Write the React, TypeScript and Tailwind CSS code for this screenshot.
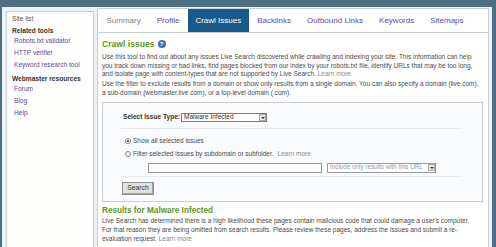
const tabs = ["Summary", "Profile", "Crawl Issues", "Backlinks", "Outbound Links", "Keywords", "Sitemaps"];

export default function App() {
  return (
    <div className="h-[247px] w-[496px] overflow-hidden bg-[#4d6e83] pl-[2px] pr-[4px] pt-[7px] font-['Liberation_Sans',Arial,sans-serif]">
      <div className="flex h-[260px] gap-[3px] bg-[#edf1f4] pl-[4px] pr-[3px] pt-[1px]">
        <Sidebar />
        <main className="min-w-0 flex-1 border border-[#c5ced6] bg-white">
          <nav className="flex h-[24px] items-stretch gap-[1px] border-b border-[#c5ced6] pl-[1px] text-[8px] whitespace-nowrap">
            {tabs.map((tab) => (
              <span
                key={tab}
                className={`flex items-center px-[7.5px] ${
                  tab === "Crawl Issues"
                    ? "bg-[#1a5a8a] text-white"
                    : tab === "Summary"
                      ? "text-[#808080]"
                      : "text-[#5b4ba6]"
                }`}
              >
                {tab}
              </span>
            ))}
          </nav>
          <section className="px-[4px] pt-[5px] text-[6.5px] leading-[8.5px] text-[#4a4a4a] whitespace-nowrap">
            <h2 className="flex items-center gap-[3px] text-[8.6px] font-bold leading-[12px] text-[#5c9a24]">
              Crawl issues
              <span className="flex h-[8px] w-[8px] items-center justify-center rounded-full bg-[#3f6fb5] text-[6px] text-white">?</span>
            </h2>
            <p className="mt-[3px]">
              Use this tool to find out about any issues Live Search discovered while crawling and indexing your site. This information can help
              <br />
              you track down missing or bad links, find pages blocked from our index by your robots.txt file, identify URLs that may be too long,
              <br />
              and isolate page with content-types that are not supported by Live Search. <span className="text-[#8a8a8a]">Learn more</span>
            </p>
            <p className="mt-[1.5px]">
              Use the filter to exclude results from a domain or show only results from a single domain. You can also specify a domain (live.com),
              <br />
              a sub-domain (webmaster.live.com), or a top-level domain (.com).
            </p>
            <FilterBox />
            <h3 className="mt-[4px] text-[8.2px] font-bold leading-[10px] text-[#5c9a24]">Results for Malware Infected</h3>
            <p className="leading-[9px]">
              Live Search has determined there is a high likelihood these pages contain malicious code that could damage a user's computer.
              <br />
              For that reason they are being omitted from search results. Please review these pages, address the issues and submit a re-
              <br />
              evaluation request. <span className="text-[#8a8a8a]">Learn more</span>
            </p>
          </section>
        </main>
      </div>
    </div>
  );
}

function Sidebar() {
  return (
    <aside className="mt-[3px] w-[88px] shrink-0 border border-[#c5ced6] bg-[#fdfefb] px-[5px] pt-[1px] text-[6.6px] leading-[12px] whitespace-nowrap">
      <p className="text-[#555]">Site list</p>
      <p className="mt-[2px] font-bold leading-[8px] text-[#333]">Related tools</p>
      <ul className="pl-[2px] text-[#5b4ba6]">
        <li>Robots.txt validator</li>
        <li>HTTP verifier</li>
        <li>Keyword research tool</li>
      </ul>
      <p className="mt-[4px] font-bold leading-[8px] text-[#333]">Webmaster resources</p>
      <ul className="pl-[2px] text-[#5b4ba6]">
        <li>Forum</li>
        <li>Blog</li>
        <li>Help</li>
      </ul>
    </aside>
  );
}

function FilterBox() {
  return (
    <div className="mt-[5px] mr-[1px] border border-[#c9cdd2] bg-[#fafbfd] pb-[6px] pt-[10px]">
      <div className="flex items-center pl-[20px]">
        <span className="text-[6.6px] font-bold text-[#333]">Select Issue Type:</span>
        <span className="ml-[1px] flex h-[9px] w-[86px] items-center justify-between border border-[#7a7a7a] bg-white pl-[2px] text-[6.5px] text-[#333]">
          Malware Infected
          <Arrow />
        </span>
      </div>
      <div className="ml-[18px] mr-[20px] mt-[6px] border-t border-[#e8eaee]" />
      <div className="mt-[8px] flex flex-col gap-[4.5px] pl-[22px]">
        <label className="flex items-center gap-[2px]">
          <Radio checked />
          Show all selected issues
        </label>
        <label className="flex items-center gap-[2px]">
          <Radio />
          Filter selected issues by subdomain or subfolder. <span className="ml-[2px] text-[#8a8a8a]">Learn more</span>
        </label>
      </div>
      <div className="mt-[4px] flex items-center gap-[5px] pl-[45px]">
        <span className="h-[10px] w-[174px] border border-[#9a9a9a] bg-white" />
        <span className="flex h-[10px] w-[109px] items-center justify-between border border-[#9a9a9a] bg-white pl-[2px] text-[6.3px] text-[#999]">
          Include only results with this URL
          <Arrow />
        </span>
      </div>
      <div className="ml-[18px] mr-[20px] mt-[3px] border-t border-[#e8eaee]" />
      <div className="mt-[5px] pl-[19px]">
        <span className="inline-flex h-[13px] w-[32px] items-center justify-center border border-[#8f8f8f] bg-[#e4e4dc] text-[6.8px] text-[#333] shadow-[inset_-1px_-1px_0_#a0a0a0]">
          Search
        </span>
      </div>
    </div>
  );
}

function Radio({ checked = false }: { checked?: boolean }) {
  return (
    <span className="flex h-[6px] w-[6px] items-center justify-center rounded-full border border-[#888] bg-white">
      {checked ? <span className="h-[2px] w-[2px] rounded-full bg-[#333]" /> : null}
    </span>
  );
}

function Arrow() {
  return (
    <span className="flex h-[7px] w-[7px] items-center justify-center border border-[#aaa] bg-[#e6e6e0]">
      <svg width="4" height="2" viewBox="0 0 4 2">
        <path d="M0 0h4L2 2z" fill="#333" />
      </svg>
    </span>
  );
}
